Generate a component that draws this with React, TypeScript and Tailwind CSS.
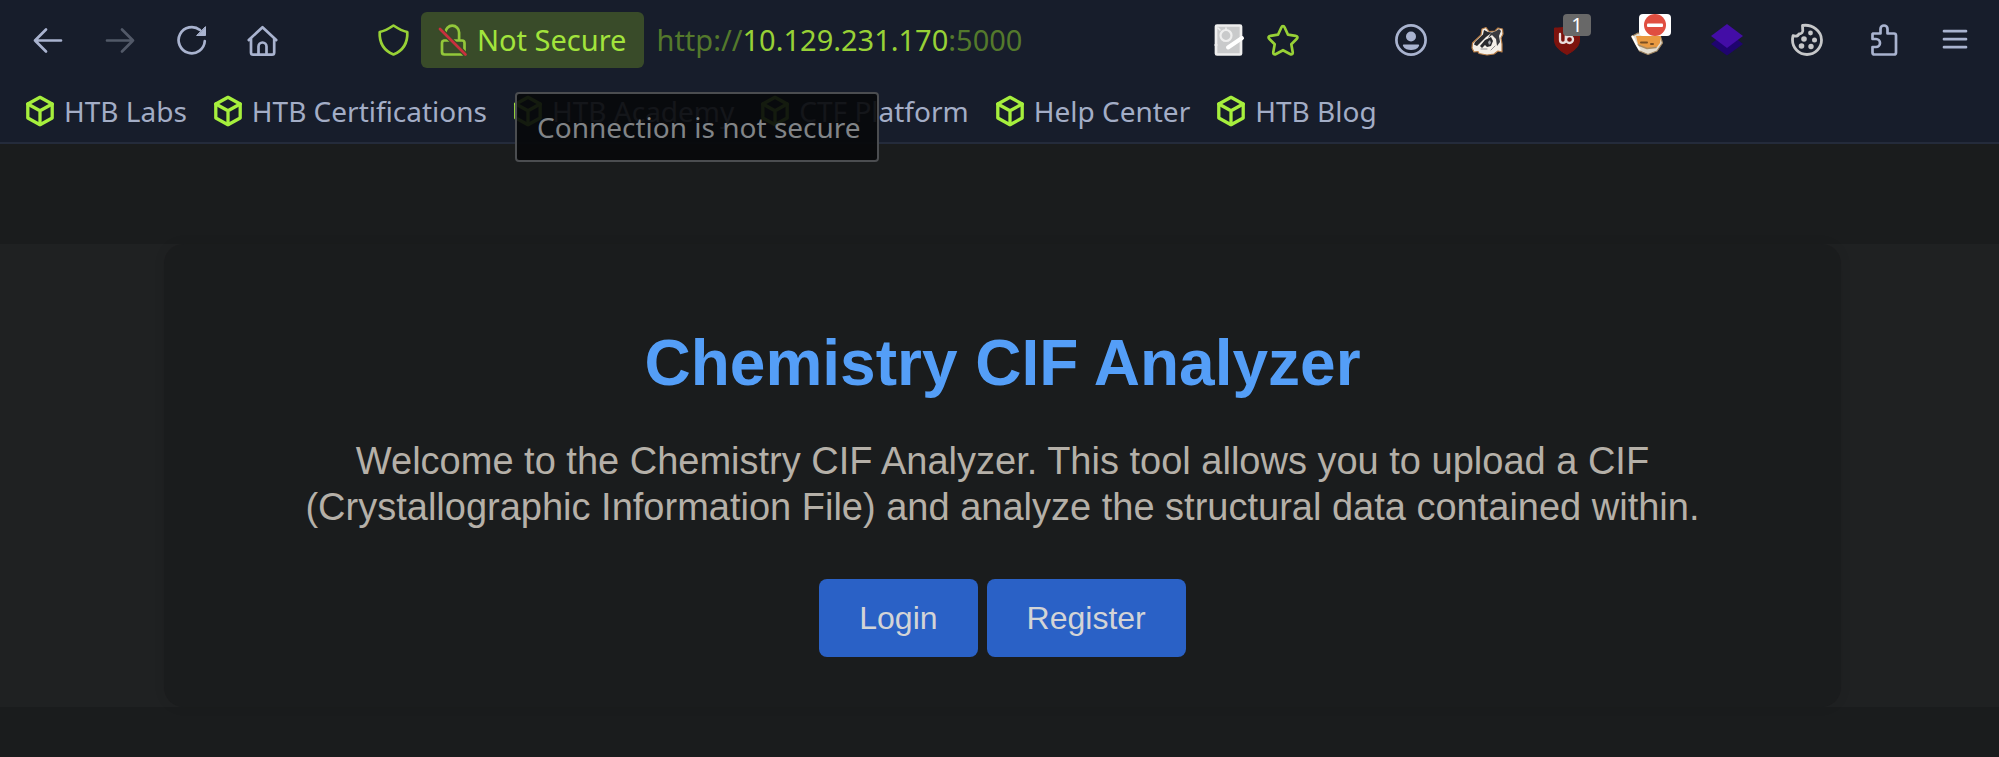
import type { ReactNode } from "react";

function Icon({ children, className = "" }: { children: ReactNode; className?: string }) {
  return (
    <svg
      viewBox="0 0 32 32"
      className={`size-8 shrink-0 overflow-visible ${className}`}
      fill="none"
      stroke="currentColor"
      strokeWidth="2.7"
      strokeLinecap="round"
      strokeLinejoin="round"
      aria-hidden="true"
    >
      {children}
    </svg>
  );
}

function ToolButton({ label, children, className = "" }: { label: string; children: ReactNode; className?: string }) {
  return (
    <button type="button" aria-label={label} className={`relative size-8 shrink-0 ${className}`}>
      {children}
    </button>
  );
}

function CubeIcon() {
  return (
    <svg
      viewBox="0 0 28 32"
      className="h-8 w-7 shrink-0"
      fill="none"
      stroke="#a6ef3d"
      strokeWidth="3.3"
      strokeLinejoin="round"
      strokeLinecap="round"
      aria-hidden="true"
    >
      <path d="M14 2.3 26.2 9v14L14 29.7 1.8 23V9Z" />
      <path d="M1.8 9 14 15.8 26.2 9M14 15.8v13.7" />
    </svg>
  );
}

const bookmarks = ["HTB Labs", "HTB Certifications", "HTB Academy", "CTF Platform", "Help Center", "HTB Blog"];

function Toolbar() {
  return (
    <div className="flex h-20 items-center pr-7 pl-8">
      <nav aria-label="Navigation" className="flex gap-10">
        <ToolButton label="Back">
          <Icon>
            <path d="M29 16.5H3M14 5.5 3 16.5l11 11" />
          </Icon>
        </ToolButton>
        <ToolButton label="Forward" className="text-[#525968]">
          <Icon>
            <path d="M3 16.5h26M18 5.5l11 11-11 11" />
          </Icon>
        </ToolButton>
        <ToolButton label="Reload">
          <Icon>
            <path d="M28.8 17A13.1 13.1 0 1 1 24 6" />
            <path d="M29.5 3v8.5H21Z" fill="currentColor" strokeWidth="1" />
          </Icon>
        </ToolButton>
        <ToolButton label="Home">
          <Icon>
            <path d="M.8 16 14.5 3.2 28.2 16M3 14.5V28.5a2.2 2.2 0 0 0 2.2 2.2H24a2.2 2.2 0 0 0 2.2-2.2V14.5" />
            <path d="M10.5 30.5V22.5a4 4 0 0 1 8 0v8" />
          </Icon>
        </ToolButton>
      </nav>

      <div className="ml-[97px] flex min-w-0 flex-1 items-center text-[29px] leading-10 text-[#98d136]">
        <ToolButton label="Tracking protection">
          <Icon>
            <path d="M16.5 1.5C12 4.5 7.5 7 2.7 8c-.5 11 4 18.5 13.8 22.5C26.3 26.5 30.8 19 30.3 8c-4.8-1-9.3-3.5-13.8-6.5Z" />
          </Icon>
        </ToolButton>
        <div className="relative ml-3 shrink-0">
          <button
            type="button"
            aria-describedby="connection-tip"
            className="flex h-14 items-center gap-2 rounded-md bg-[#394b29] pr-[18px] pl-4 text-[#a2e43c]"
          >
            <Icon>
              <path
                d="M8.5 10V8.5a6.8 6.8 0 0 1 13.6 0V15M7 16.5h18a2.5 2.5 0 0 1 2.5 2.5v9a2.5 2.5 0 0 1-2.5 2.5H7.5A2.5 2.5 0 0 1 5 28v-9a2.5 2.5 0 0 1 2-2.5"
                stroke="#93c83a"
              />
              <path d="m3 5 25.5 25.5" stroke="#394b29" strokeWidth="5" strokeLinecap="butt" />
              <path d="m3 5 25.5 25.5" stroke="#c9303d" />
            </Icon>
            <span>Not Secure</span>
          </button>
          <div
            id="connection-tip"
            role="tooltip"
            className="absolute top-20 left-[94px] z-10 flex h-[70px] items-center rounded-sm border-2 border-[#4b4d50] bg-[#08090b]/92 pr-4 pl-5 text-[28px] whitespace-nowrap text-[#818487]"
          >
            Connection is not secure
          </div>
        </div>
        <div
          role="textbox"
          aria-label="Address"
          contentEditable
          suppressContentEditableWarning
          className="min-w-0 flex-1 pl-3 whitespace-nowrap text-[#54792c] outline-none"
        >
          http://<span className="text-[#98d136]">10.129.231.170</span>:5000
        </div>
        <div className="flex gap-[22px]">
          <ToolButton label="Reader notes">
            <Icon>
              <rect x="3" y="1.5" width="25" height="29" rx="1" fill="#c9cacb" stroke="#eeeeee" />
              <circle cx="13" cy="11.5" r="5.5" stroke="#eeeeee" strokeWidth="2.2" />
              <path d="m7 6-2-2M13 4v2M2 21h2" stroke="#eeeeee" strokeWidth="1.6" />
              <path d="m29 14-14 9.500" stroke="#ffffff" strokeWidth="4" />
            </Icon>
          </ToolButton>
          <ToolButton label="Bookmark this page">
            <Icon>
              <path d="M16 2.2c1 0 1.4.6 1.8 1.5l3.2 7 7.6 1.1c2 .3 2.4 1.8 1 3.2l-5.3 5.3 1.4 7.8c.3 2-1 2.8-2.7 1.9l-7-3.8-7 3.8c-1.7.9-3 .1-2.7-1.9l1.4-7.8L2.4 15c-1.4-1.4-1-2.9 1-3.2l7.6-1.1 3.2-7c.4-.9.8-1.5 1.8-1.5Z" />
            </Icon>
          </ToolButton>
        </div>
      </div>

      <ToolButton label="Account" className="ml-24">
        <Icon>
          <circle cx="16" cy="16" r="14.6" />
          <circle cx="16" cy="12.5" r="5" fill="currentColor" stroke="none" />
          <path d="M9 20.5h14c1 0 1.3.5 1 1.5-1.5 3-5 4-8 4s-6.5-1-8-4c-.3-1 0-1.5 1-1.5Z" fill="currentColor" stroke="none" />
        </Icon>
      </ToolButton>

      <div className="ml-11 flex gap-12">
        <ToolButton label="Privacy Badger">
          <Icon>
            <path
              d="M1 24 1.500 19 10 11l1-6 4-1.500 3 4 6-.500 3-3 4.500 1 .500 5-2 4 1 6v8l-4-1-4 3-7 1-8-1.500-1-2-4 .500Z"
              fill="#f4efe8"
              stroke="#b97f48"
              strokeWidth="1.2"
            />
            <path d="M12 10.500 13 6l4 2 4 .500-6 4.500-9 9-3-1.500 1-2.500Z" fill="#292a2e" stroke="none" />
            <path d="m25 7 3-2 2 2-2 5 1 6-3 4-1-7-4-4-4 3 3-5Z" fill="#3a3b40" stroke="none" />
            <path d="m9 22 5-6 6-3 2 4-2 5-4 1-2-2-3 3Z" fill="#292a2e" stroke="none" />
            <path d="m17 18 2-2 1 3-2 2Z" fill="#a5a7ad" stroke="none" />
            <path d="M10 25h6M20 26l4-4" stroke="#8f8f92" strokeWidth="1" />
          </Icon>
        </ToolButton>
        <ToolButton label="uBlock Origin">
          <Icon>
            <path d="M16 2.5C12 4 8 4 3.5 4v12c0 7 6 11 12.5 14.5C22.5 27 28.5 23 28.5 16V4C24 4 20 4 16 2.5Z" fill="#7d130e" stroke="#7d130e" strokeWidth="1" />
            <path d="M9 10v6a2.9 2.9 0 0 0 5.8 0v-4" stroke="#eadfdf" strokeWidth="2.3" />
            <circle cx="18.5" cy="15.5" r="3.500" stroke="#eadfdf" strokeWidth="2.3" />
          </Icon>
          <span className="absolute -top-2.5 left-3 flex h-[22px] w-7 items-center justify-center rounded-sm bg-[#686868] text-[20px] leading-none text-white">
            1
          </span>
        </ToolButton>
        <ToolButton label="Foxy Cookie Blocker">
          <Icon>
            <path d="M.5 12.5 7 9l22 2 2.500 8-5.500 8-9 3.500L8.500 27 3.500 18Z" fill="#e4ddd0" stroke="#a08560" strokeWidth="1.2" />
            <path d="M5 12h25l-1 7-3 4-10 1.500L7 20Z" fill="#e99a41" stroke="none" />
            <path d="m6 20.500 10 4 9-1" stroke="#a98a5f" strokeWidth="1.500" />
            <path d="M10 18.500h6M20 20h2" stroke="#7a4f22" strokeWidth="2" />
            <path d="m1.500 12.500 4 8 3 5" stroke="#ffffff" strokeWidth="2" />
          </Icon>
          <span className="absolute -top-2.5 left-2 flex h-[22px] w-8 items-center justify-center rounded-sm bg-white">
            <svg viewBox="0 0 22 22" className="size-[22px]" aria-hidden="true">
              <circle cx="11" cy="11" r="11" fill="#e04e40" />
              <rect x="3" y="9.5" width="16" height="3.5" rx="1" fill="#ffffff" />
            </svg>
          </span>
        </ToolButton>
        <ToolButton label="Layers">
          <Icon>
            <path d="M0 20 5 16h22l5 4-16 11.5Z" fill="#1f046f" stroke="none" />
            <path d="M16 0 32 12 16 24 0 12Z" fill="#430da6" stroke="none" />
          </Icon>
        </ToolButton>
        <ToolButton label="Cookie editor" className="text-[#c6c7c9]">
          <Icon>
            <path d="M11.5 1.5c10-1.5 19 5.5 19 14.5a14.5 14.5 0 0 1-29 0c0-1.5.2-3 .5-4.3 2.5.8 5 .3 6-1.7 2.500 0 4.5-2 3.700-4.500Z" strokeWidth="2.8" />
            <g fill="currentColor" stroke="none">
              <circle cx="19.5" cy="9" r="2.4" />
              <circle cx="13" cy="15" r="2.8" />
              <circle cx="23.5" cy="16" r="2.5" />
              <circle cx="10.5" cy="22" r="2.8" />
              <circle cx="20" cy="22.5" r="2.7" />
            </g>
          </Icon>
        </ToolButton>
        <ToolButton label="Extensions">
          <Icon>
            <path d="M2 9.5h7.5V5a3.5 3.5 0 0 1 7 0v4.5h6.5a2 2 0 0 1 2 2v17a2 2 0 0 1-2 2H3.5a2 2 0 0 1-2-2V23H5a4 4 0 0 0 0-8H1.5V10" />
          </Icon>
        </ToolButton>
      </div>

      <ToolButton label="Menu" className="ml-9">
        <Icon>
          <path d="M5 7.2h22M5 15.2h22M5 23.2h22" />
        </Icon>
      </ToolButton>
    </div>
  );
}

function Bookmarks() {
  return (
    <nav aria-label="Bookmarks" className="flex h-16 items-center gap-[27px] border-b-2 border-[#242b3b] pl-[26px] text-[28px] leading-10">
      {bookmarks.map((name) => (
        <a key={name} href="#" className="flex items-center gap-[10px] whitespace-nowrap text-[#a3adc6]">
          <CubeIcon />
          {name}
        </a>
      ))}
    </nav>
  );
}

const action = "rounded-lg bg-[#2a61c6] px-10 py-5 text-[32px] leading-[38px] text-[#d3d4d6]";

export default function App() {
  return (
    <div className="min-h-screen bg-[#1a1c1d]">
      <header className="bg-[#171d2b] font-['Noto_Sans',sans-serif] text-[#a9b3cf]">
        <Toolbar />
        <Bookmarks />
      </header>
      <main className="pt-[100px] font-['Liberation_Sans',Arial,sans-serif]">
        <div className="bg-[#1f2122] pr-[158px] pl-[164px]">
          <section className="rounded-[20px] bg-[#1a1c1d] px-[100px] pt-[82px] pb-[50px] text-center shadow-[0_0_12px_rgba(0,0,0,0.08)]">
            <h1 className="text-[64px] leading-[74px] font-bold text-[#549ef7]">Chemistry CIF Analyzer</h1>
            <p className="mt-[38px] text-[38px] leading-[46px] text-[#b5b0a8]">
              Welcome to the Chemistry CIF Analyzer. This tool allows you to upload a CIF (Crystallographic Information
              File) and analyze the structural data contained within.
            </p>
            <div className="mt-[49px] flex justify-center gap-[9px]">
              <a href="#login" className={action}>
                Login
              </a>
              <a href="#register" className={action}>
                Register
              </a>
            </div>
          </section>
        </div>
      </main>
    </div>
  );
}
